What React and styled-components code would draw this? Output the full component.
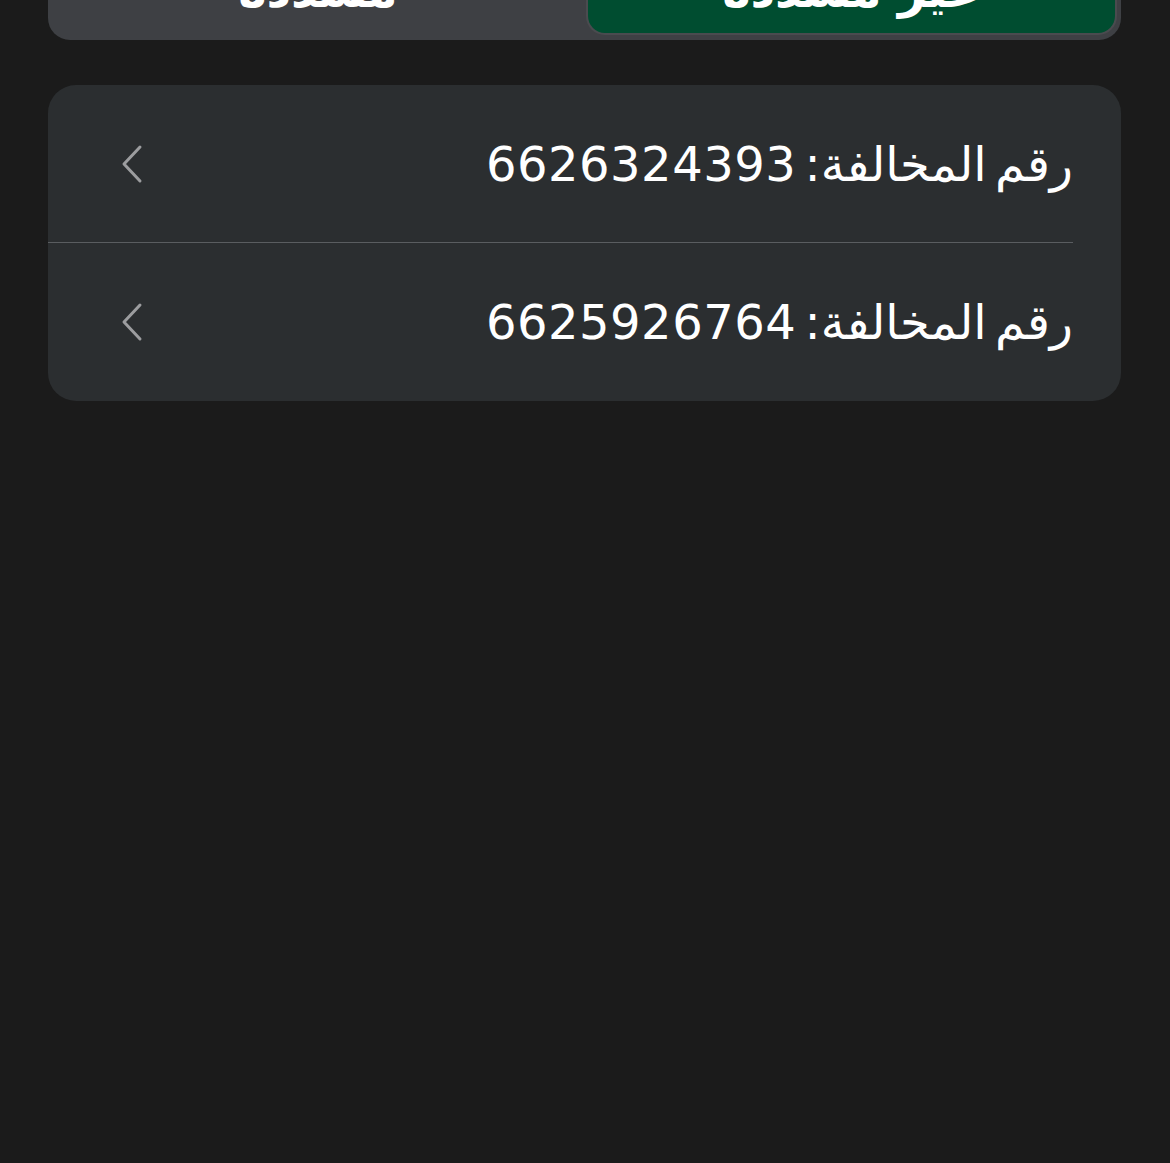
import React from 'react'
import styled, { createGlobalStyle } from 'styled-components'

const GlobalStyle = createGlobalStyle`
  html, body {
    margin: 0;
    padding: 0;
    background: #1b1b1b;
  }
  body {
    font-family: "DejaVu Sans", "Noto Sans", sans-serif;
    color: #ffffff;
  }
`

const violations = ['6626324393', '6625926764']

const App = () => {
  return (
    <Page dir="rtl">
      <GlobalStyle />
      <Segmented>
        <Segment $active>غير مسددة</Segment>
        <Segment>مسددة</Segment>
      </Segmented>
      <Card>
        {violations.map((num, i) => (
          <Row key={num} $divider={i < violations.length - 1}>
            <Label>
              رقم المخالفة: <Num>{num}</Num>
            </Label>
            <Chevron viewBox="0 0 24 40">
              <path d="M20 3 L4 20 L20 37" />
            </Chevron>
          </Row>
        ))}
      </Card>
    </Page>
  )
}

const Page = styled.div`
  display: flex;
  flex-direction: column;
  padding: 0 49px 0 48px;
  min-height: 1163px;
  box-sizing: border-box;
  overflow: hidden;
`

const Segmented = styled.div`
  margin-top: -60px;
  height: 100px;
  display: flex;
  gap: 6px;
  padding: 6px 6px 7px 6px;
  box-sizing: border-box;
  background: #3e4044;
  border-radius: 22px;
`

const Segment = styled.div`
  flex: 1;
  display: flex;
  align-items: center;
  justify-content: center;
  border-radius: 17px;
  background: ${(p) => (p.$active ? '#004d30' : 'transparent')};
  box-shadow: ${(p) => (p.$active ? '0 0 0 2px #4a4b4f' : 'none')};
  font-size: 48px;
  font-weight: bold;
  color: #ffffff;
`

const Card = styled.div`
  margin-top: 45px;
  background: #2b2e30;
  border-radius: 28px;
  display: flex;
  flex-direction: column;
`

const Row = styled.div`
  position: relative;
  height: 158px;
  display: flex;
  align-items: center;
  justify-content: space-between;
  padding: 0 48px 0 72px;

  &::after {
    content: '';
    display: ${(p) => (p.$divider ? 'block' : 'none')};
    position: absolute;
    bottom: 0;
    right: 48px;
    left: 0;
    height: 1px;
    background: #5a5d60;
  }
`

const Label = styled.div`
  font-size: 48px;
  line-height: 1;
  color: #ffffff;
  white-space: nowrap;
  word-spacing: -7px;
`

const Num = styled.span`
  display: inline-block;
  font-family: "DejaVu Sans", sans-serif;
  letter-spacing: 0.5px;
  word-spacing: 0;
`

const Chevron = styled.svg`
  width: 24px;
  height: 40px;
  fill: none;
  stroke: #9c9d9f;
  stroke-width: 3;
  stroke-linecap: round;
  stroke-linejoin: round;
`

export default App
